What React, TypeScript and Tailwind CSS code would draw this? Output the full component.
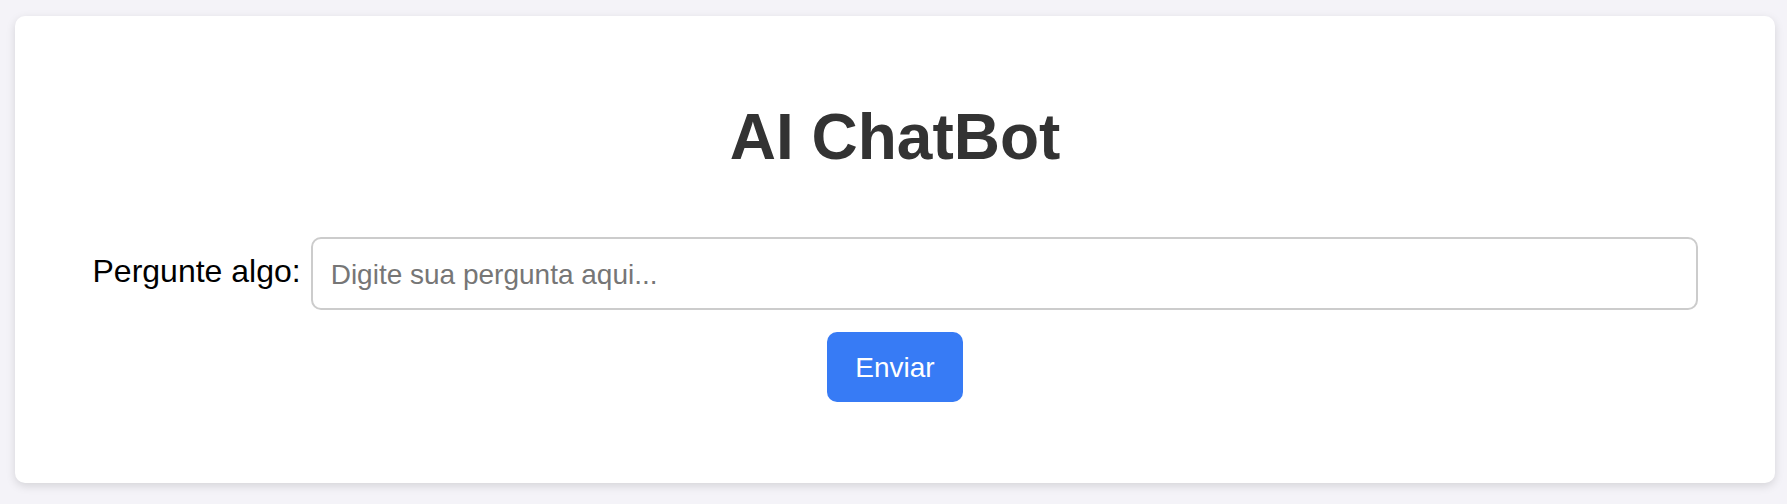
export default function App() {
	return (
		<div className="min-h-screen bg-[#f4f3f8] pt-[16px] pl-[15px] font-['Liberation_Sans',Arial,sans-serif]">
			{/* カード */}
			<div className="w-[1760px] h-[467px] bg-white rounded-[10px] shadow-[0_3px_10px_rgba(0,0,0,0.13)] flex flex-col items-center">
				<h1 className="mt-[89px] text-[64px] leading-[64px] font-bold text-[#333333]">
					AI ChatBot
				</h1>
				<div className="mt-[68px] w-[1605px] flex items-center gap-[10px]">
					<label htmlFor="pergunta" className="text-[32px] leading-[37px] pb-[4px] text-black whitespace-nowrap">
						Pergunte algo:
					</label>
					<input
						id="pergunta"
						type="text"
						placeholder="Digite sua pergunta aqui..."
						className="flex-1 h-[73px] border-2 border-[#cccccc] rounded-[10px] px-[18px] pt-[2px] text-[28px] text-black placeholder:text-[#767676] outline-none bg-white"
					/>
				</div>
				<button
					type="button"
					className="mt-[22px] w-[136px] h-[70px] rounded-[10px] bg-[#377bf5] text-white text-[28px] pt-[2px]"
				>
					Enviar
				</button>
			</div>
		</div>
	);
}
